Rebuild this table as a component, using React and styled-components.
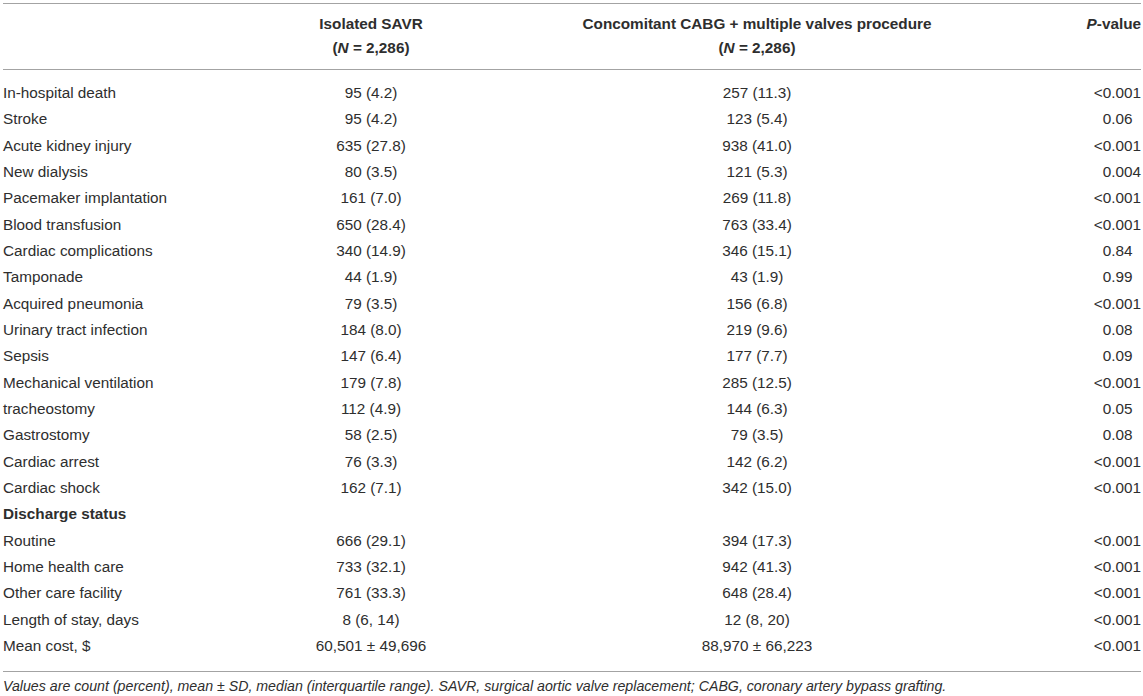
import React from "react";
import styled, { createGlobalStyle } from "styled-components";

const GlobalStyle = createGlobalStyle`
  html, body {
    margin: 0;
    padding: 0;
    background: #fff;
  }
  body {
    font-family: "Liberation Sans", Arial, sans-serif;
    color: #2e2e2e;
  }
`;

const rows = [
  ["In-hospital death", "95 (4.2)", "257 (11.3)", "<0.001"],
  ["Stroke", "95 (4.2)", "123 (5.4)", "0.06"],
  ["Acute kidney injury", "635 (27.8)", "938 (41.0)", "<0.001"],
  ["New dialysis", "80 (3.5)", "121 (5.3)", "0.004"],
  ["Pacemaker implantation", "161 (7.0)", "269 (11.8)", "<0.001"],
  ["Blood transfusion", "650 (28.4)", "763 (33.4)", "<0.001"],
  ["Cardiac complications", "340 (14.9)", "346 (15.1)", "0.84"],
  ["Tamponade", "44 (1.9)", "43 (1.9)", "0.99"],
  ["Acquired pneumonia", "79 (3.5)", "156 (6.8)", "<0.001"],
  ["Urinary tract infection", "184 (8.0)", "219 (9.6)", "0.08"],
  ["Sepsis", "147 (6.4)", "177 (7.7)", "0.09"],
  ["Mechanical ventilation", "179 (7.8)", "285 (12.5)", "<0.001"],
  ["tracheostomy", "112 (4.9)", "144 (6.3)", "0.05"],
  ["Gastrostomy", "58 (2.5)", "79 (3.5)", "0.08"],
  ["Cardiac arrest", "76 (3.3)", "142 (6.2)", "<0.001"],
  ["Cardiac shock", "162 (7.1)", "342 (15.0)", "<0.001"],
  { section: "Discharge status" },
  ["Routine", "666 (29.1)", "394 (17.3)", "<0.001"],
  ["Home health care", "733 (32.1)", "942 (41.3)", "<0.001"],
  ["Other care facility", "761 (33.3)", "648 (28.4)", "<0.001"],
  ["Length of stay, days", "8 (6, 14)", "12 (8, 20)", "<0.001"],
  ["Mean cost, $", "60,501 \u00b1 49,696", "88,970 \u00b1 66,223", "<0.001"],
];

const Page = styled.div`
  width: 1143px;
  padding: 3px 2px 0 3px;
  box-sizing: border-box;
`;

const Grid = styled.div`
  display: grid;
  grid-template-columns: 228px 280px 492px 1fr;
  font-size: 15.3px;
`;

const Head = styled.div`
  grid-column: 1 / -1;
  display: grid;
  grid-template-columns: subgrid;
  border-top: 1px solid #a3a3a3;
  border-bottom: 1px solid #a3a3a3;
  padding: 8px 0 9px;
  font-weight: bold;
  line-height: 24px;
`;

const HeadCell = styled.div`
  text-align: ${(p) => p.$align || "center"};
`;

const Body = styled.div`
  grid-column: 1 / -1;
  display: grid;
  grid-template-columns: subgrid;
  grid-auto-rows: 26.33px;
  padding: 10px 0 12px;
  border-bottom: 1px solid #a3a3a3;
  align-items: center;
`;

const Label = styled.div`
  text-align: left;
  font-weight: ${(p) => (p.$bold ? "bold" : "normal")};
  white-space: nowrap;
`;

const Value = styled.div`
  text-align: center;
  white-space: nowrap;
`;

const PValue = styled.div`
  text-align: right;
  white-space: nowrap;
  padding-right: ${(p) => (p.$short ? "0.556em" : "0")};
`;

const Note = styled.p`
  margin: 5px 0 0;
  font-size: 14.2px;
  font-style: italic;
  line-height: 18px;
  white-space: nowrap;
`;

export default function App() {
  return (
    <Page>
      <GlobalStyle />
      <Grid>
        <Head>
          <HeadCell />
          <HeadCell>
            Isolated SAVR
            <br />(<i>N</i> = 2,286)
          </HeadCell>
          <HeadCell>
            Concomitant CABG + multiple valves procedure
            <br />(<i>N</i> = 2,286)
          </HeadCell>
          <HeadCell $align="right">
            <i>P</i>-value
          </HeadCell>
        </Head>
        <Body>
          {rows.map((r, i) =>
            r.section ? (
              <React.Fragment key={i}>
                <Label $bold>{r.section}</Label>
                <Value />
                <Value />
                <PValue />
              </React.Fragment>
            ) : (
              <React.Fragment key={i}>
                <Label>{r[0]}</Label>
                <Value>{r[1]}</Value>
                <Value>{r[2]}</Value>
                <PValue $short={/^\d\.\d\d$/.test(r[3])}>{r[3]}</PValue>
              </React.Fragment>
            )
          )}
        </Body>
      </Grid>
      <Note>
        Values are count (percent), mean ± SD, median (interquartile range).
        SAVR, surgical aortic valve replacement; CABG, coronary artery bypass
        grafting.
      </Note>
    </Page>
  );
}
